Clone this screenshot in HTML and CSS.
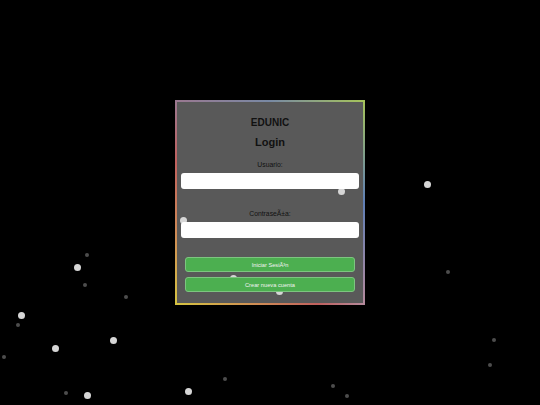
FILE: index.html
```html
<!DOCTYPE html>
<html>
<head>
  <meta charset="utf-8">
  <title>EDUNIC - Login</title>
  <link rel="stylesheet" href="styles.css">
</head>
<body>
<div class="sky">
    <span class="dot big" style="left:423.5px;top:180.5px"></span>
    <span class="dot big" style="left:337.5px;top:187.5px"></span>
    <span class="dot big" style="left:179.5px;top:216.5px"></span>
    <span class="dot big" style="left:74px;top:264px"></span>
    <span class="dot big" style="left:18px;top:311.5px"></span>
    <span class="dot big" style="left:110px;top:337px"></span>
    <span class="dot big" style="left:51.5px;top:345px"></span>
    <span class="dot big" style="left:84px;top:391.5px"></span>
    <span class="dot big" style="left:185px;top:387.5px"></span>
    <span class="dot big" style="left:275.5px;top:287.5px"></span>
    <span class="dot big" style="left:229.5px;top:275px"></span>
    <span class="dot" style="left:84.7px;top:253.3px"></span>
    <span class="dot" style="left:82.7px;top:283px"></span>
    <span class="dot" style="left:123.7px;top:294.7px"></span>
    <span class="dot" style="left:16px;top:322.7px"></span>
    <span class="dot" style="left:2.3px;top:354.7px"></span>
    <span class="dot" style="left:64px;top:391.3px"></span>
    <span class="dot" style="left:446.3px;top:270.3px"></span>
    <span class="dot" style="left:492.3px;top:337.7px"></span>
    <span class="dot" style="left:488px;top:363.3px"></span>
    <span class="dot" style="left:222.7px;top:376.7px"></span>
    <span class="dot" style="left:330.7px;top:384.3px"></span>
    <span class="dot" style="left:344.7px;top:394.3px"></span>
</div>

<div class="login-box">
    <h1 class="brand">EDUNIC</h1>
    <h2 class="title">Login</h2>
    <form class="login-form">
        <label for="usuario">Usuario:</label>
        <input type="text" id="usuario" class="input-box">
        <label for="clave" class="second">ContraseÃ±a:</label>
        <input type="password" id="clave" class="input-box">
        <button type="submit" class="btn first">Iniciar SesiÃ³n</button>
        <button type="button" class="btn">Crear nueva cuenta</button>
    </form>
</div>
</body>
</html>
```

FILE: styles.css
```css
html, body {
    margin: 0;
    height: 100%;
    width: 100%;
}
body {
    display: flex;
    align-items: center;
    justify-content: center;
    background: #000;
    font-family: "Liberation Sans", Arial, sans-serif;
    overflow: hidden;
}
.sky {
    position: absolute;
    top: 0;
    left: 0;
    right: 0;
    bottom: 0;
    z-index: 1;
    pointer-events: none;
}
.dot {
    position: absolute;
    width: 4px;
    height: 4px;
    border-radius: 50%;
    background: #4d4d4d;
}
.dot.big {
    width: 7px;
    height: 7px;
    background: #d6d6d6;
}
/* rainbow frame: one gradient per edge */
.login-box {
    width: 190px;
    height: 205px;
    box-sizing: border-box;
    border: 2px solid transparent;
    padding: 15px 4px 0;
    text-align: center;
    background:
        linear-gradient(#595959, #595959) padding-box,
        linear-gradient(to right, #9a7890, #7889a4 50%, #a6c45a) top / 100% 2px no-repeat border-box,
        linear-gradient(to bottom, #a6c45a, #5f7fb6 50%, #b58a9c) right / 2px 100% no-repeat border-box,
        linear-gradient(to right, #d6c441, #cf8a55 45%, #c0605e 75%, #b58a9c) bottom / 100% 2px no-repeat border-box,
        linear-gradient(to bottom, #9a7890, #c0605e 30%, #cf8a55 65%, #d6c441) left / 2px 100% no-repeat border-box;
}
.brand {
    margin: 0;
    font-size: 10px;
    line-height: 12px;
    font-weight: bold;
    color: #111;
}
.title {
    margin: 7px 0 0;
    font-size: 11px;
    line-height: 13px;
    font-weight: bold;
    color: #111;
}
.login-form {
    display: flex;
    flex-direction: column;
}
.login-form label {
    margin-top: 12.2px;
    font-size: 6.8px;
    line-height: 8px;
    color: #111;
}
.login-form label.second {
    margin-top: 21.3px;
}
input.input-box {
    position: relative;
    z-index: 2;
    margin: 3.7px 0 0;
    height: 16px;
    box-sizing: border-box;
    border: none;
    border-radius: 3px;
    background: #fff;
    padding: 0 4px;
    font-size: 7px;
}
.btn {
    position: relative;
    z-index: 2;
    margin: 4.6px 4.3px 0;
    height: 15.4px;
    box-sizing: border-box;
    padding: 0;
    border: 1px solid #7dc580;
    border-radius: 3px;
    background: #4caf50;
    color: #f2f2f2;
    font-family: "Liberation Sans", Arial, sans-serif;
    font-size: 5.7px;
    cursor: pointer;
}
.btn.first {
    margin-top: 19px;
}
```
